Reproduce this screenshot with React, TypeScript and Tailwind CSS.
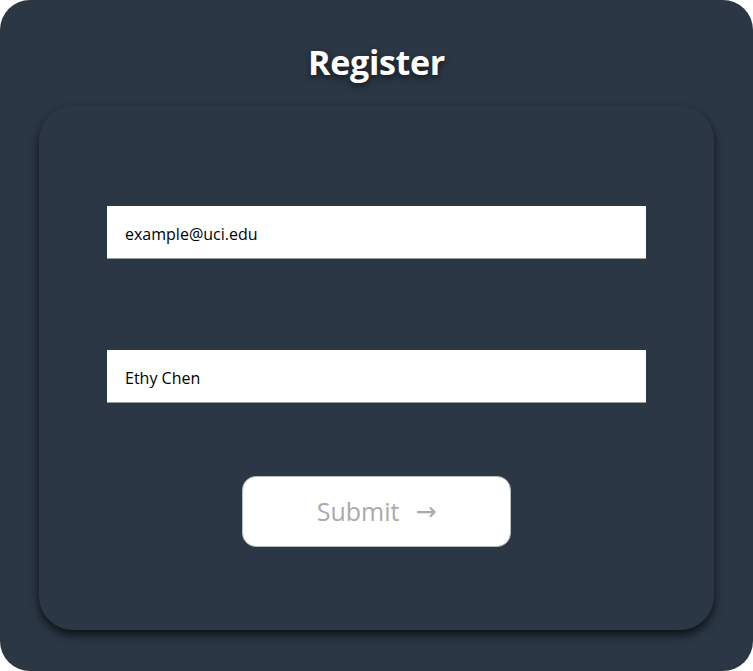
export default function App() {
  return (
    <div className="w-[753px] h-[671px] bg-white">
      <div
        className="w-[753px] h-[671px] rounded-[30px] bg-[#2b3745] flex flex-col items-center pt-[38px]"
        style={{ fontFamily: '"Open Sans", "Noto Sans", sans-serif' }}
      >
        <h1 className="text-[34px] leading-[48px] font-bold text-white tracking-[-0.3px] [text-shadow:0_3px_6px_rgba(0,0,0,0.6)]">
          Register
        </h1>

        <div className="mt-[20px] w-[675px] h-[524px] rounded-[34px] bg-[#2b3745] shadow-[0_5px_10px_rgba(0,0,0,0.7)] flex flex-col items-center pt-[100px]">
          <input
            defaultValue="example@uci.edu"
            className="w-[539px] h-[53px] bg-white px-[18px] pt-[3px] text-[16px] text-black border-b border-[#9a9a9a] outline-none"
          />
          <input
            defaultValue="Ethy Chen"
            className="mt-[91px] w-[539px] h-[53px] bg-white px-[18px] pt-[3px] text-[16px] text-black border-b border-[#9a9a9a] outline-none"
          />
          <button className="mt-[73px] w-[269px] h-[71px] rounded-[14px] bg-white border border-[#bbb] text-[25px] text-[#aaa] flex items-center justify-center gap-[16px]">
            <span>Submit</span>
            <span className="text-[25px] font-[DejaVu_Sans]">→</span>
          </button>
        </div>
      </div>
    </div>
  )
}
